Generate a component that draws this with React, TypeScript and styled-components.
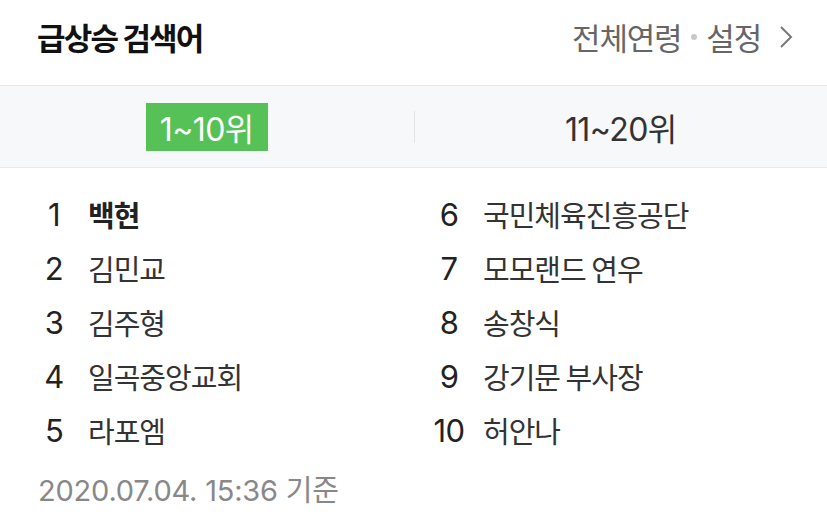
import React from "react";
import styled, { createGlobalStyle } from "styled-components";

const Global = createGlobalStyle`
  html, body { margin: 0; padding: 0; background: #fff; }
  body { font-family: "Inter", "Noto Sans CJK KR", sans-serif; -webkit-font-smoothing: antialiased; }
`;

const Page = styled.div`
  width: 827px;
  height: 531px;
  background: #fff;
  overflow: hidden;
`;

const Header = styled.div`
  height: 86px;
  box-sizing: border-box;
  padding: 0 34px 12px 37px;
  display: flex;
  align-items: center;
  justify-content: space-between;
  border-bottom: 1px solid #e6e7e9;
`;

const Title = styled.h1`
  margin: 0;
  font-family: "Noto Sans CJK KR", sans-serif;
  font-size: 31px;
  font-weight: 700;
  letter-spacing: -1.8px;
  color: #111;
`;

const Options = styled.div`
  display: flex;
  align-items: center;
  font-family: "Noto Sans CJK KR", sans-serif;
  font-size: 31px;
  letter-spacing: -1.2px;
  color: #666;
`;

const Dot = styled.span`
  width: 6px;
  height: 6px;
  border-radius: 50%;
  background: #c8c8c8;
  margin: 0 9px 0 10px;
`;

const Chevron = styled.svg`
  margin-left: 18px;
  display: block;
`;

const Tabs = styled.div`
  height: 81px;
  background: #f7f8fa;
  border-bottom: 1px solid #e8e9eb;
  display: grid;
  grid-template-columns: 1fr 1fr;
  align-items: center;
`;

const TabCell = styled.div<{ $divider?: boolean }>`
  display: flex;
  justify-content: center;
  align-items: center;
  height: 32px;
  border-left: ${(p) => (p.$divider ? "1px solid #e2e3e5" : "none")};
`;

const TabLabel = styled.span<{ $active?: boolean }>`
  display: inline-flex;
  align-items: center;
  justify-content: center;
  height: 48px;
  padding: 0 14px;
  font-size: 32px;
  letter-spacing: -0.6px;
  color: ${(p) => (p.$active ? "#fff" : "#333")};
  background: ${(p) => (p.$active ? "#55c157" : "transparent")};
`;

const List = styled.div`
  display: grid;
  grid-template-columns: 395px 1fr;
  grid-template-rows: repeat(5, 54px);
  grid-auto-flow: column;
  padding: 19px 0 0 36px;
`;

const Row = styled.div`
  display: flex;
  align-items: center;
`;

const Rank = styled.span`
  width: 36px;
  text-align: center;
  font-size: 31px;
  color: #222;
  letter-spacing: -0.6px;
`;

const Keyword = styled.span<{ $bold?: boolean }>`
  margin-left: 16px;
  font-family: "Noto Sans CJK KR", sans-serif;
  font-size: 29px;
  letter-spacing: -1px;
  font-weight: ${(p) => (p.$bold ? 700 : 400)};
  color: ${(p) => (p.$bold ? "#222" : "#333")};
`;

const Footer = styled.div`
  height: 54px;
  display: flex;
  align-items: center;
  padding: 4px 0 0 38px;
  font-size: 29px;
  color: #888;
  letter-spacing: -0.2px;
`;

const items = [
  "백현",
  "김민교",
  "김주형",
  "일곡중앙교회",
  "라포엠",
  "국민체육진흥공단",
  "모모랜드 연우",
  "송창식",
  "강기문 부사장",
  "허안나",
];

export default function App() {
  return (
    <Page>
      <Global />
      <Header>
        <Title>급상승 검색어</Title>
        <Options>
          <span>전체연령</span>
          <Dot />
          <span>설정</span>
          <Chevron width="14" height="24" viewBox="0 0 14 24">
            <path d="M2 2 L12 12 L2 22" fill="none" stroke="#777" strokeWidth="2" />
          </Chevron>
        </Options>
      </Header>
      <Tabs>
        <TabCell>
          <TabLabel $active>1~10위</TabLabel>
        </TabCell>
        <TabCell $divider>
          <TabLabel>11~20위</TabLabel>
        </TabCell>
      </Tabs>
      <List>
        {items.map((t, i) => (
          <Row key={t}>
            <Rank>{i + 1}</Rank>
            <Keyword $bold={i === 0}>{t}</Keyword>
          </Row>
        ))}
      </List>
      <Footer>2020.07.04. 15:36 기준</Footer>
    </Page>
  );
}
